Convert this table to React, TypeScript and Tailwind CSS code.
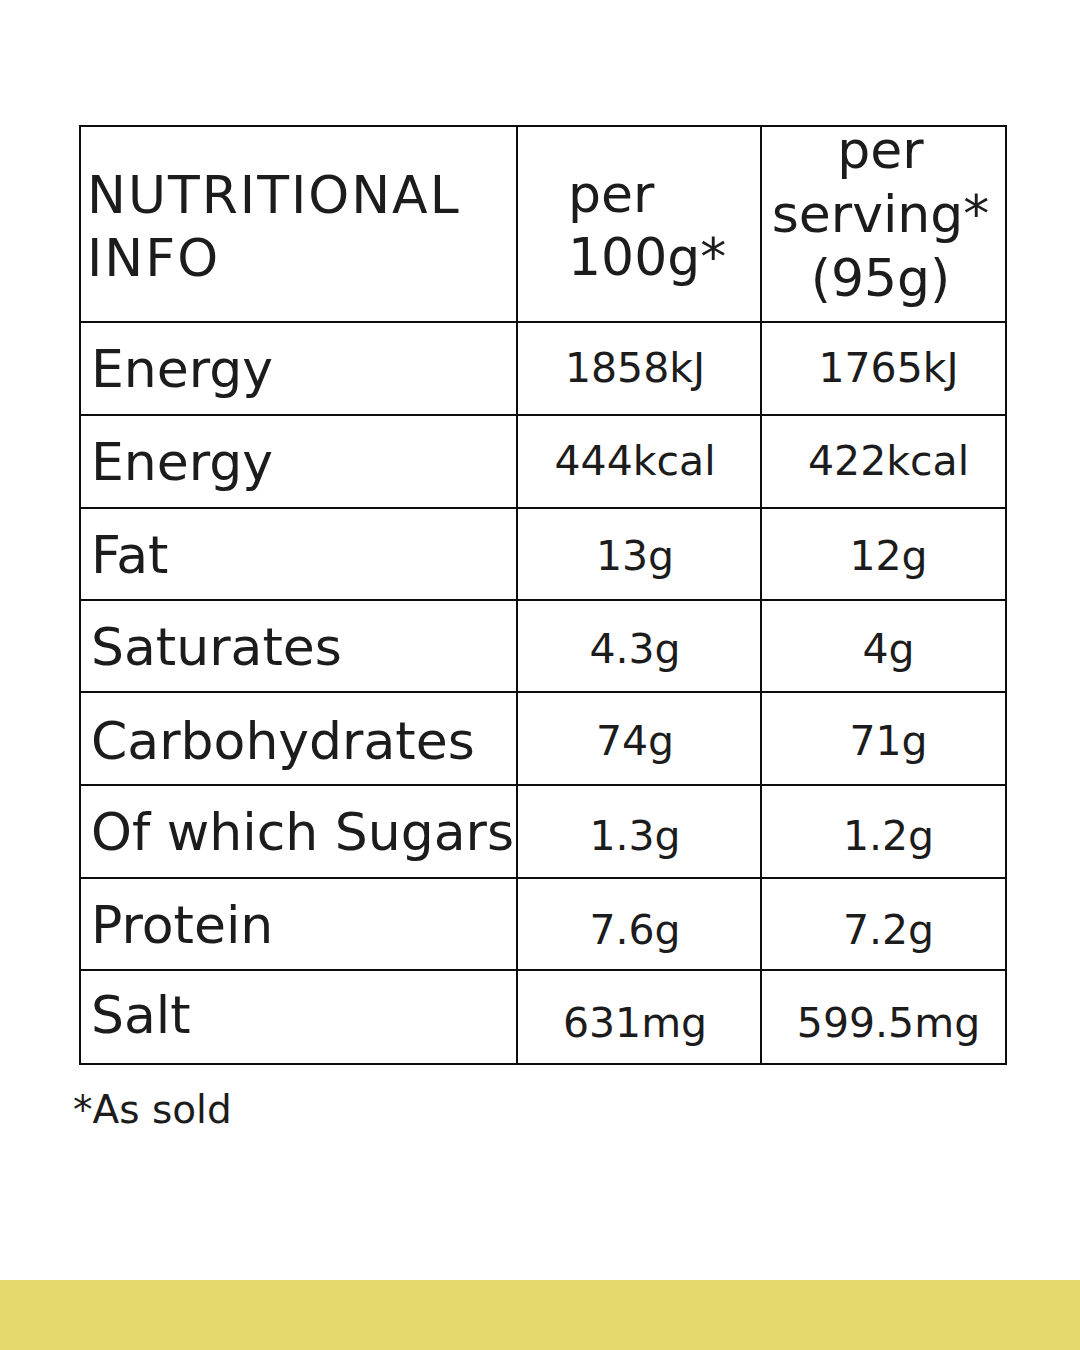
import React from "react";

const rows: { label: string; a: string; b: string; h: number; lp: number; vp: number }[] = [
  { label: "Energy", a: "1858kJ", b: "1765kJ", h: 93, lp: 20, vp: 25 },
  { label: "Energy", a: "444kcal", b: "422kcal", h: 93, lp: 20, vp: 25 },
  { label: "Fat", a: "13g", b: "12g", h: 92, lp: 20, vp: 27 },
  { label: "Saturates", a: "4.3g", b: "4g", h: 92, lp: 20, vp: 28 },
  { label: "Carbohydrates", a: "74g", b: "71g", h: 93, lp: 22, vp: 28 },
  { label: "Of which Sugars", a: "1.3g", b: "1.2g", h: 93, lp: 20, vp: 30 },
  { label: "Protein", a: "7.6g", b: "7.2g", h: 92, lp: 20, vp: 31 },
  { label: "Salt", a: "631mg", b: "599.5mg", h: 94, lp: 18, vp: 32 },
];

export default function App() {
  return (
    <div
      className="flex h-[1350px] w-[1080px] flex-col bg-white text-[#1c1c1c]"
      style={{ fontFamily: '"DejaVu Sans", "Noto Sans", sans-serif' }}
    >
      <div className="ml-[79px] mt-[125px] w-fit">
        <div className="grid grid-cols-[437px_244px_245px] border-l-2 border-t-2 border-[#0d0d0d]">
          {/* header */}
          <div className="h-[196px] border-b-2 border-r-2 border-[#0d0d0d] pl-[6px] pt-[37px] text-[52px] leading-[63px] tracking-[2px]">
            <div>NUTRITIONAL</div>
            <div>INFO</div>
          </div>
          <div className="h-[196px] border-b-2 border-r-2 border-[#0d0d0d] pl-[50px] pt-[36px] text-[52px] leading-[63px]">
            <div>per</div>
            <div>100g*</div>
          </div>
          <div className="flex h-[196px] flex-col items-center border-b-2 border-r-2 border-[#0d0d0d] pr-[6px] text-[52px] leading-[64px]">
            <div className="-mt-[9px] text-center">
              <div>per</div>
              <div>serving*</div>
              <div>(95g)</div>
            </div>
          </div>
          {rows.map((r, i) => (
            <React.Fragment key={i}>
              <div
                className="whitespace-nowrap border-b-2 border-r-2 border-[#0d0d0d] pl-[10px] text-[52px] leading-[52px]"
                style={{ height: r.h, paddingTop: r.lp }}
              >
                {r.label}
              </div>
              <div
                className="border-b-2 border-r-2 border-[#0d0d0d] pr-[8px] text-center text-[41px] leading-[41px]"
                style={{ height: r.h, paddingTop: r.vp }}
              >
                {r.a}
              </div>
              <div
                className="border-b-2 border-r-2 border-[#0d0d0d] pl-[10px] text-center text-[41px] leading-[41px]"
                style={{ height: r.h, paddingTop: r.vp }}
              >
                {r.b}
              </div>
            </React.Fragment>
          ))}
        </div>
      </div>
      <div className="ml-[73px] mt-[25px] text-[39px] leading-[39px]">*As sold</div>
      <div className="mt-auto h-[70px] w-full bg-[#e5d86d]" />
    </div>
  );
}
